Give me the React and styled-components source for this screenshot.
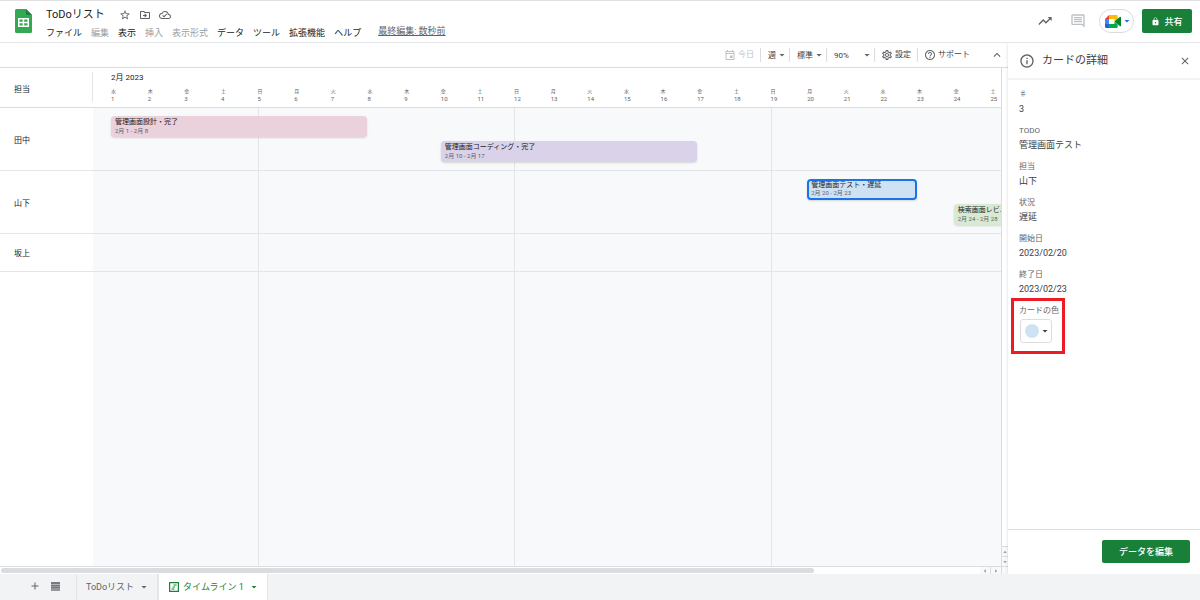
import styled, { createGlobalStyle, css } from 'styled-components'
import {
    MdStarBorder,
    MdOutlineDriveFileMove,
    MdOutlineCloudDone,
    MdTrendingUp,
    MdOutlineComment,
    MdLock,
    MdArrowDropDown,
    MdArrowDropUp,
    MdArrowLeft,
    MdArrowRight,
    MdOutlineEvent,
    MdOutlineSettings,
    MdHelpOutline,
    MdKeyboardArrowUp,
    MdInfoOutline,
    MdClose,
    MdAdd,
} from 'react-icons/md'

const menus = [
    { label: 'ファイル' },
    { label: '編集', off: true },
    { label: '表示' },
    { label: '挿入', off: true },
    { label: '表示形式', off: true },
    { label: 'データ' },
    { label: 'ツール' },
    { label: '拡張機能' },
    { label: 'ヘルプ' },
]

const weekdays = ['水', '木', '金', '土', '日', '月', '火']
const days = Array.from({ length: 25 }, (_, i) => ({ date: i + 1, name: weekdays[i % 7] }))
const sundays = [5, 12, 19]

const rows = [
    {
        name: '田中',
        lanes: 2,
        cards: [
            { title: '管理画面設計・完了', dates: '2月 1 - 2月 8', from: 1, to: 8, lane: 1, color: '#ead1dc' },
            { title: '管理画面コーディング・完了', dates: '2月 10 - 2月 17', from: 10, to: 17, lane: 2, color: '#d9d2e9' },
        ],
    },
    {
        name: '山下',
        lanes: 2,
        cards: [
            { title: '管理画面テスト・遅延', dates: '2月 20 - 2月 23', from: 20, to: 23, lane: 1, color: '#cfe2f3', selected: true },
            { title: '検索画面レビ...', dates: '2月 24 - 2月 28', from: 24, to: 28, lane: 2, color: '#d9ead3' },
        ],
    },
    { name: '坂上', lanes: 1, cards: [] },
]

const details = [
    { label: '♯', value: '3' },
    { label: 'TODO', value: '管理画面テスト' },
    { label: '担当', value: '山下' },
    { label: '状況', value: '遅延' },
    { label: '開始日', value: '2023/02/20' },
    { label: '終了日', value: '2023/02/23' },
]

// grid line 1 is the name column, line 2 the small gap before the 1st
const dayLine = (date) => Math.min(date + 2, 28)

function SheetsLogo() {
    return (
        <svg width="17" height="24" viewBox="0 0 17 24">
            <path d="M1.500 0H11l6 6v16.500a1.500 1.500 0 0 1-1.500 1.500h-14A1.500 1.500 0 0 1 0 22.500v-21A1.500 1.500 0 0 1 1.500 0z" fill="#34a853" />
            <path d="M11 0l6 6h-4.500A1.500 1.500 0 0 1 11 4.500z" fill="#188038" />
            <path d="M3 9h11v9H3zM4.500 10.500v2.200h3.200v-2.200zM9.200 10.500v2.200h3.300v-2.200zM4.500 14.200v2.300h3.200v-2.300zM9.200 14.200v2.300h3.300v-2.300z" fill="#fff" fillRule="evenodd" />
        </svg>
    )
}

function MeetLogo() {
    return (
        <svg width="16" height="13" viewBox="0 0 16 13">
            <path d="M0 4l4-4v4z" fill="#ea4335" />
            <path d="M0 4h4v5H0z" fill="#4285f4" />
            <path d="M0 9h4v4H1.200A1.200 1.200 0 0 1 0 11.800z" fill="#1967d2" />
            <path d="M4 0h7.500A1.200 1.200 0 0 1 12.700 1.200V4L9.500 6.500V4H4z" fill="#fbbc04" />
            <path d="M4 9h5.500V6.500l3.200 3v2.300a1.200 1.200 0 0 1-1.200 1.200H4z" fill="#00ac47" />
            <path d="M9.500 6.500L15 1.800c.4-.3 1 0 1 .5v8.400c0 .5-.6.800-1 .5z" fill="#00832d" />
        </svg>
    )
}

function SheetListIcon() {
    return (
        <svg width="9" height="9" viewBox="0 0 9 9">
            <path d="M0 0h9v2H0zM0 2.400h9v2H0zM0 4.800h9v2H0zM0 7.200h9v1.600H0z" fill="#757a7f" />
        </svg>
    )
}

function TimelineIcon() {
    return (
        <svg width="10" height="10" viewBox="0 0 10 10" fill="none" stroke="#188038">
            <path d="M.6.6h8.800v8.800H.6z" strokeWidth="1.200" />
            <path d="M4.600 3h3M3.600 5h2.400M2.400 7h3" strokeWidth="1" />
        </svg>
    )
}

function Header() {
    return (
        <TopBar>
            <SheetsLogo />
            <TitleBlock>
                <TitleRow>
                    <h1>ToDoリスト</h1>
                    <IconButton aria-label="スター"><MdStarBorder size={12} /></IconButton>
                    <IconButton aria-label="移動"><MdOutlineDriveFileMove size={12} /></IconButton>
                    <IconButton aria-label="保存状況"><MdOutlineCloudDone size={12} /></IconButton>
                </TitleRow>
                <MenuRow>
                    {menus.map((m) => (
                        <MenuButton key={m.label} disabled={m.off}>{m.label}</MenuButton>
                    ))}
                    <LastEdit href="#history">最終編集: 数秒前</LastEdit>
                </MenuRow>
            </TitleBlock>
            <Actions>
                <IconButton aria-label="アクティビティ"><MdTrendingUp size={16} /></IconButton>
                <IconButton aria-label="コメント" $faded><MdOutlineComment size={16} /></IconButton>
                <MeetButton aria-label="通話">
                    <MeetLogo />
                    <MdArrowDropDown size={12} color="#1a73e8" />
                </MeetButton>
                <GreenButton $width="50px" $height="24px">
                    <MdLock size={9} />
                    共有
                </GreenButton>
            </Actions>
        </TopBar>
    )
}

function Toolbar() {
    return (
        <Tools>
            <Tool><ToolButton disabled><MdOutlineEvent size={12} />今日</ToolButton></Tool>
            <Tool>
                <Picker aria-label="表示単位"><option>週</option></Picker>
                <MdArrowDropDown size={12} />
            </Tool>
            <Tool>
                <Picker aria-label="表示サイズ"><option>標準</option></Picker>
                <MdArrowDropDown size={12} />
            </Tool>
            <Tool>
                <Picker aria-label="ズーム" $wide><option>90%</option></Picker>
                <MdArrowDropDown size={12} />
            </Tool>
            <Tool><ToolButton><MdOutlineSettings size={12} />設定</ToolButton></Tool>
            <Tool><ToolButton><MdHelpOutline size={12} />サポート</ToolButton></Tool>
            <IconButton aria-label="閉じる"><MdKeyboardArrowUp size={14} /></IconButton>
        </Tools>
    )
}

function Timeline() {
    return (
        <Chart>
            <ChartHead>
                <HeadName>担当</HeadName>
                <Month>2月 2023</Month>
                {days.map((d) => (
                    <Day key={d.date} $line={dayLine(d.date)}>
                        <span>{d.name}</span>
                        {d.date}
                    </Day>
                ))}
            </ChartHead>
            <Board>
                <WeekLines>
                    {sundays.map((d) => <WeekLine key={d} $line={dayLine(d)} />)}
                </WeekLines>
                <Rows>
                    {rows.map((r) => (
                        <Row key={r.name} $lanes={r.lanes}>
                            <RowName>{r.name}</RowName>
                            {r.cards.map((c) => (
                                <Card
                                    key={c.title}
                                    $from={dayLine(c.from)}
                                    $to={dayLine(c.to)}
                                    $lane={c.lane}
                                    $color={c.color}
                                    $selected={c.selected}
                                >
                                    <strong>{c.title}</strong>
                                    <span>{c.dates}</span>
                                </Card>
                            ))}
                        </Row>
                    ))}
                </Rows>
            </Board>
        </Chart>
    )
}

function Panel() {
    return (
        <Side>
            <SideHead>
                <MdInfoOutline size={16} />
                <h2>カードの詳細</h2>
                <IconButton aria-label="閉じる"><MdClose size={12} /></IconButton>
            </SideHead>
            <SideBody>
                {details.map((d) => (
                    <Field key={d.label}>
                        <dt>{d.label}</dt>
                        <dd>{d.value}</dd>
                    </Field>
                ))}
                <Highlight>
                    <dt id="card-color">カードの色</dt>
                    <dd>
                        <ColorButton aria-labelledby="card-color">
                            <Swatch />
                            <MdArrowDropDown size={12} />
                        </ColorButton>
                    </dd>
                </Highlight>
            </SideBody>
            <SideFoot>
                <GreenButton $width="88px" $height="23px">データを編集</GreenButton>
            </SideFoot>
        </Side>
    )
}

function App() {
    return (
        <Page>
            <GlobalStyle />
            <Header />
            <Main>
                <Sheet>
                    <Toolbar />
                    <Viewport>
                        <Timeline />
                        <VScroll>
                            <ScrollArrow><MdArrowDropUp size={8} /></ScrollArrow>
                            <ScrollArrow><MdArrowDropDown size={8} /></ScrollArrow>
                        </VScroll>
                    </Viewport>
                    <HScroll>
                        <Track><Thumb /></Track>
                        <ScrollArrow $wide><MdArrowLeft size={8} /></ScrollArrow>
                        <ScrollArrow $wide><MdArrowRight size={8} /></ScrollArrow>
                        <Corner />
                    </HScroll>
                </Sheet>
                <Panel />
            </Main>
            <Tabs>
                <IconButton aria-label="シートを追加"><MdAdd size={12} /></IconButton>
                <IconButton aria-label="すべてのシート"><SheetListIcon /></IconButton>
                <Tab>ToDoリスト<MdArrowDropDown size={12} /></Tab>
                <Tab $active><TimelineIcon />タイムライン 1<MdArrowDropDown size={12} /></Tab>
            </Tabs>
        </Page>
    )
}

export default App

const GlobalStyle = createGlobalStyle`
    *{
        box-sizing:border-box;
    }
    body{
        margin:0;
        font-family:Roboto, "Noto Sans CJK JP", sans-serif;
        font-size:9px;
        color:#3c4043;
        background-color:#fff;
    }
    button, select{
        font:inherit;
        color:inherit;
        background:none;
        border:none;
        padding:0;
        margin:0;
        cursor:pointer;
    }
    h1, h2, dl, dd{
        margin:0;
        font-weight:normal;
    }
    svg{
        flex-shrink:0;
        display:block;
    }
`

const Page = styled.div`
    height:100vh;
    display:flex;
    flex-direction:column;
    overflow:hidden;
`

const TopBar = styled.header`
    display:flex;
    align-items:flex-start;
    padding:8px 8px 0 15px;
    height:43px;
    flex-shrink:0;
    border-top:1px solid #e0e0e0;
    border-bottom:1px solid #e3e5e8;
`

const TitleBlock = styled.div`
    flex:1;
    margin-left:14px;
    margin-top:-2px;
`

const TitleRow = styled.div`
    display:flex;
    align-items:center;
    gap:8px;
    height:16px;

    h1{
        font-size:11px;
        line-height:14px;
        color:#202124;
        margin-right:6px;
    }
`

const MenuRow = styled.nav`
    display:flex;
    align-items:center;
    gap:9px;
    height:20px;
`

const MenuButton = styled.button`
    color:#202124;
    line-height:20px;
    white-space:nowrap;

    &:disabled{
        color:#9aa0a6;
    }
`

const LastEdit = styled.a`
    color:#5f6368;
    line-height:16px;
    margin-left:8px;
    align-self:flex-start;
    white-space:nowrap;
`

const IconButton = styled.button`
    display:flex;
    align-items:center;
    color:${props => props.$faded ? '#bdc1c6' : '#5f6368'};
`

const Actions = styled.div`
    display:flex;
    align-items:center;

    > ${IconButton}{
        margin-right:17px;
    }
    > ${IconButton} + ${IconButton}{
        margin-right:13px;
    }
`

const MeetButton = styled.button`
    display:flex;
    align-items:center;
    justify-content:center;
    width:35px;
    height:24px;
    padding-left:4px;
    margin-right:8px;
    border:1px solid #dadce0;
    border-radius:12px;
`

const GreenButton = styled.button`
    display:flex;
    align-items:center;
    justify-content:center;
    gap:4px;
    width:${props => props.$width};
    height:${props => props.$height};
    border-radius:2px;
    background-color:#188038;
    color:#fff;
    font-weight:500;
`

const Main = styled.main`
    flex:1;
    min-height:0;
    display:flex;
`

const Sheet = styled.section`
    flex:1;
    min-width:0;
    display:flex;
    flex-direction:column;
`

const Tools = styled.div`
    display:flex;
    align-items:center;
    justify-content:flex-end;
    height:25px;
    flex-shrink:0;
    padding-right:4px;
    border-bottom:1px solid #dadce0;
    font-size:8px;

    > ${IconButton}{
        margin-left:14px;
    }
`

const Tool = styled.div`
    display:flex;
    align-items:center;
    height:14px;
    padding:0 6px;

    & + &{
        border-left:1px solid #dadce0;
    }
    svg{
        color:#5f6368;
    }
    > svg{
        margin:0 -5px 0 0;
        pointer-events:none;
    }
`

const ToolButton = styled.button`
    display:flex;
    align-items:center;
    gap:2px;
    line-height:12px;
    white-space:nowrap;

    &:disabled, &:disabled svg{
        color:#bdc1c6;
    }
`

const Picker = styled.select`
    appearance:none;
    width:${props => props.$wide ? '28px' : 'auto'};
    padding-left:1px;
`

const Viewport = styled.div`
    flex:1;
    min-height:0;
    display:flex;
`

const Chart = styled.div`
    flex:1;
    min-width:0;
    display:flex;
    flex-direction:column;
    overflow:hidden;
`

// 24 whole days and the start of the 25th
const columns = css`
    display:grid;
    grid-template-columns:93px 18px repeat(24, minmax(0, 38fr)) minmax(0, 11fr);
`

const ChartHead = styled.div`
    ${columns}
    grid-template-rows:18px 21px;
    height:40px;
    flex-shrink:0;
    border-bottom:1px solid #dadce0;
`

const HeadName = styled.div`
    grid-column:1;
    grid-row:1 / 3;
    display:flex;
    align-items:center;
    margin:4px 0 5px;
    padding:2px 0 0 14px;
    height:30px;
    border-right:1px solid #e3e5e8;
    font-size:8px;
    color:#202124;
`

const Month = styled.div`
    grid-column:3 / -1;
    grid-row:1;
    font-size:8px;
    line-height:20px;
    color:#202124;
`

const Day = styled.div`
    grid-column:${props => props.$line};
    grid-row:2;
    font-size:6px;
    line-height:8px;
    color:#5f6368;
    padding-top:1px;
    white-space:nowrap;

    span{
        display:block;
        font-size:5px;
    }
`

const Board = styled.div`
    flex:1;
    display:grid;
    background:linear-gradient(to right, #fff 93px, #f8f9fb 93px);
`

const WeekLines = styled.div`
    ${columns}
    grid-area:1 / 1;
`

const WeekLine = styled.div`
    grid-column:${props => props.$line};
    border-left:1px solid #e3e5e8;
`

const Rows = styled.div`
    grid-area:1 / 1;
`

const Row = styled.div`
    ${columns}
    grid-template-rows:repeat(${props => props.$lanes}, 25px);
    padding:8px 0 4px;
    border-bottom:1px solid #e3e5e8;
`

const RowName = styled.div`
    grid-column:1;
    grid-row:1 / -1;
    align-self:center;
    padding:0 0 4px 14px;
    font-size:8px;
    color:#202124;
`

const Card = styled.article`
    grid-column:${props => props.$from} / ${props => props.$to};
    grid-row:${props => props.$lane};
    height:21px;
    padding:${props => props.$selected ? '0 2px' : '1px 4px'};
    overflow:hidden;
    white-space:nowrap;
    background-color:${props => props.$color};
    border:${props => props.$selected ? '2px solid #1a73e8' : 'none'};
    border-radius:${props => props.$to === 28 ? '4px 0 0 4px' : '4px'};
    box-shadow:0 1px 2px rgba(60, 64, 67, 0.2);

    strong, span{
        display:block;
    }
    strong{
        font-size:7px;
        line-height:${props => props.$selected ? '8px' : '10px'};
        font-weight:normal;
        color:#202124;
    }
    span{
        font-size:6px;
        line-height:8px;
        color:#5f6368;
    }
`

const VScroll = styled.div`
    width:7px;
    display:flex;
    flex-direction:column;
    justify-content:flex-end;
    border-left:1px solid #dadce0;
`

const ScrollArrow = styled.div`
    display:flex;
    align-items:center;
    justify-content:center;
    width:${props => props.$wide ? '11px' : 'auto'};
    height:${props => props.$wide ? '7px' : '10px'};
    background-color:#f8f9fa;
    border:0 solid #dadce0;
    border-width:${props => props.$wide ? '0 1px 0 0' : '1px 0 0'};
    color:#80868b;
    overflow:hidden;
`

const HScroll = styled.div`
    display:flex;
    height:8px;
    flex-shrink:0;
    border-top:1px solid #dadce0;
`

const Track = styled.div`
    flex:1;
    display:flex;
    align-items:center;
    padding-left:1px;
`

const Thumb = styled.div`
    width:83%;
    height:5px;
    border-radius:3px;
    background-color:#dadce0;
`

const Corner = styled.div`
    width:6px;
    background-color:#f8f9fa;
`

const Side = styled.aside`
    width:192px;
    flex-shrink:0;
    display:flex;
    flex-direction:column;
    background-color:#fff;
    box-shadow:0 0 3px rgba(60, 64, 67, 0.2);
    clip-path:inset(0 0 0 -4px);
`

const SideHead = styled.div`
    display:flex;
    align-items:center;
    height:37px;
    padding:0 9px 0 11px;
    border-bottom:2px solid #f1f3f4;
    color:#5f6368;

    h2{
        flex:1;
        margin-left:7px;
        font-size:11px;
        line-height:16px;
        color:#3c4043;
    }
`

const SideBody = styled.dl`
    flex:1;
    padding:8px 11px 0;
    line-height:14px;

    dt{
        font-size:8px;
        color:#5f6368;
    }
    dd{
        font-size:9px;
    }
`

const Field = styled.div`
    margin-bottom:8px;
`

const Highlight = styled.div`
    width:54px;
    margin:-6px 0 0 -8px;
    padding:3px 5px 8px;
    border:3px solid #ed1c24;
    white-space:nowrap;

    dd{
        padding:1px 1px 0;
    }
`

const ColorButton = styled.button`
    display:flex;
    align-items:center;
    width:32px;
    height:24px;
    padding-left:4px;
    border:1px solid #dadce0;
    border-radius:3px;
`

const Swatch = styled.span`
    width:14px;
    height:14px;
    border-radius:50%;
    background-color:#cfe2f3;
`

const SideFoot = styled.div`
    display:flex;
    justify-content:flex-end;
    padding:10px 10px 11px;
    border-top:1px solid #dadce0;
`

const Tab = styled.button`
    display:flex;
    align-items:center;
    gap:4px;
    padding:0 7px 1px 9px;
    border:0 solid #e3e5e8;
    border-width:0 1px;
    white-space:nowrap;
    color:${props => props.$active ? '#188038' : '#5f6368'};
    background-color:${props => props.$active ? '#fff' : 'transparent'};
`

const Tabs = styled.footer`
    display:flex;
    height:26px;
    flex-shrink:0;
    padding-left:29px;
    background-color:#f1f3f4;

    > ${IconButton}{
        padding-bottom:2px;
        margin-right:10px;
    }
    > ${IconButton} + ${Tab}{
        margin-left:6px;
    }
    > ${Tab} + ${Tab}{
        padding-left:10px;
    }
`
